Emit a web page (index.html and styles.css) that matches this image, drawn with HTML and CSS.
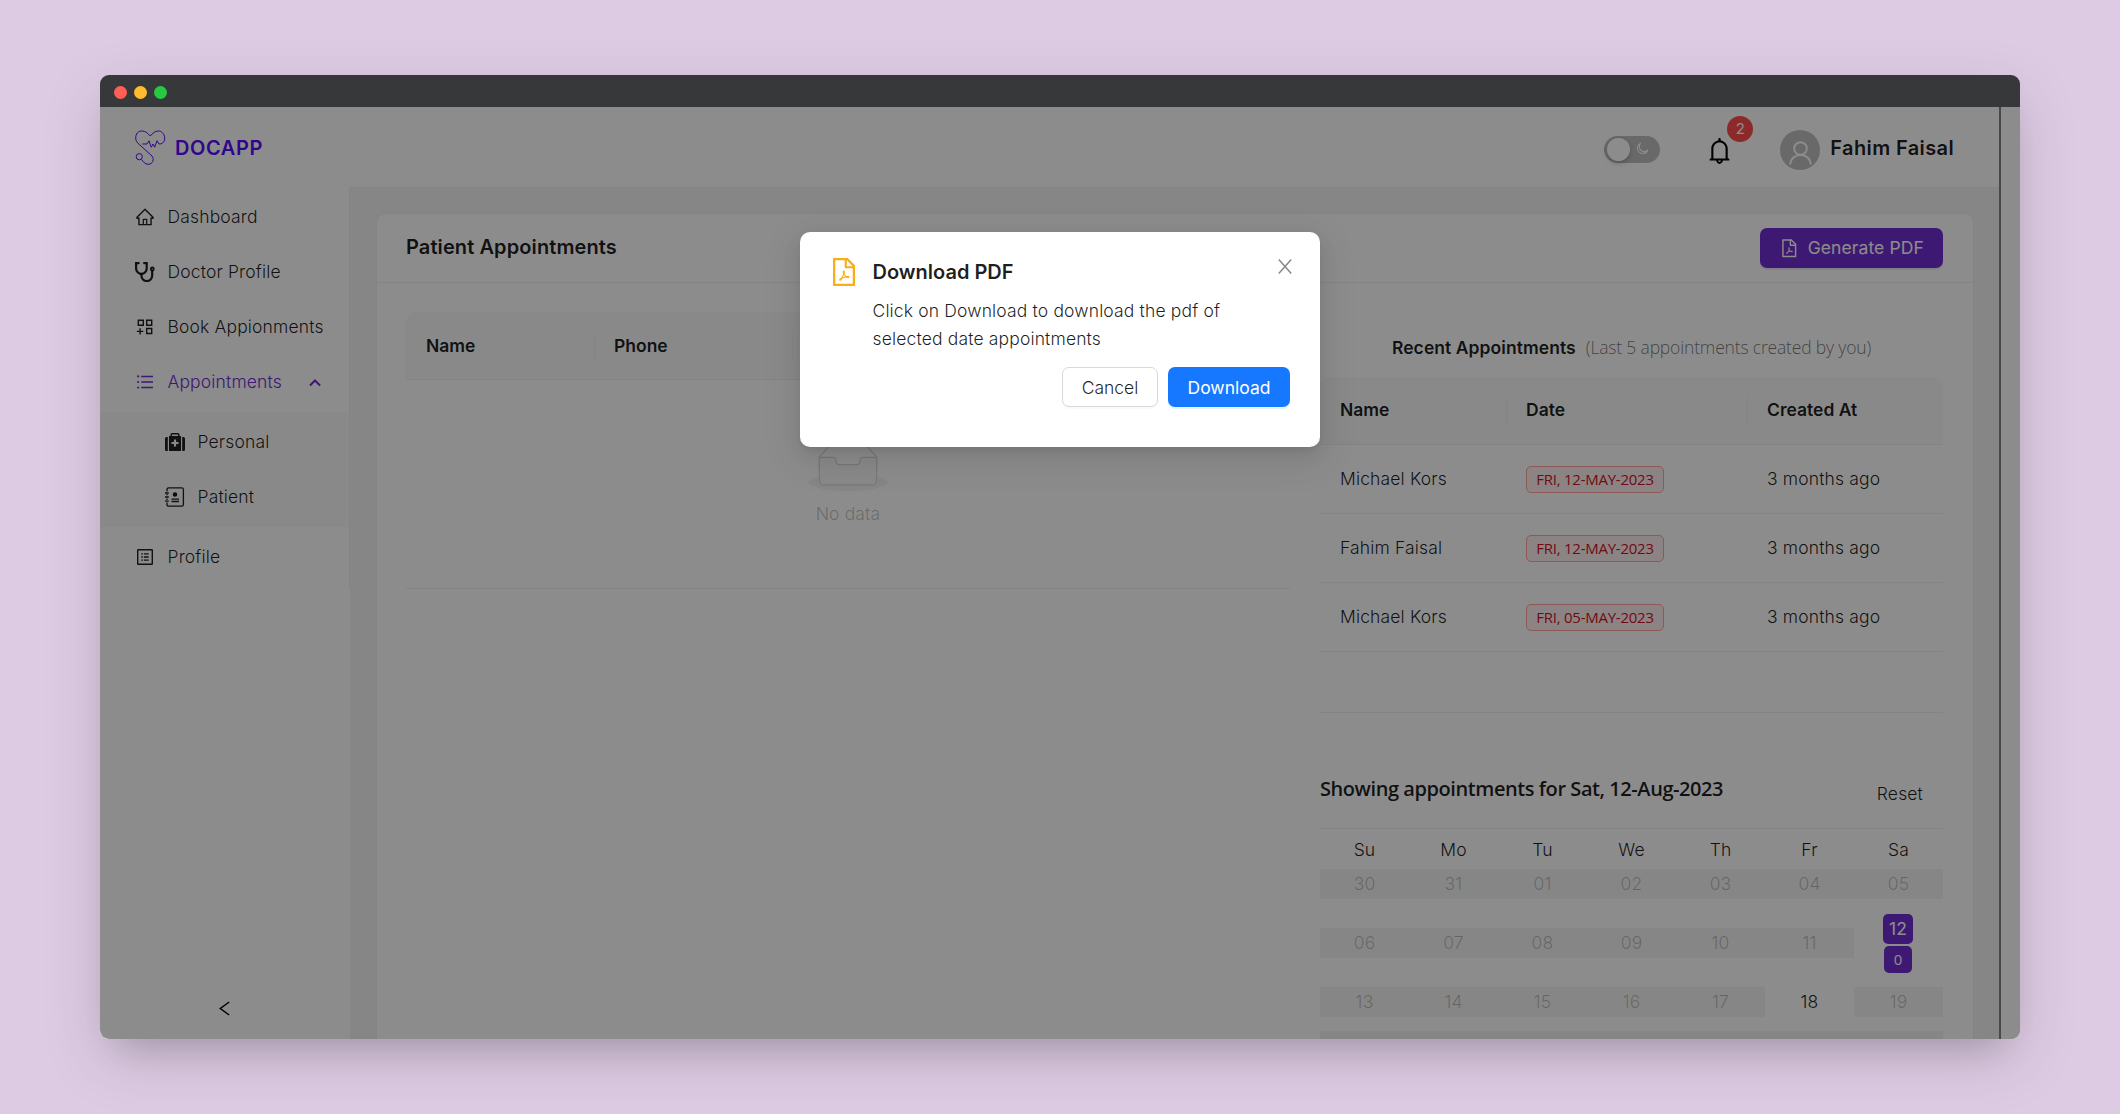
FILE: index.html
```html
<!DOCTYPE html>
<html lang="en">
<head>
<meta charset="utf-8">
<title>DocApp - Patient Appointments</title>
<link rel="stylesheet" href="styles.css">
</head>
<body>
<svg class="sprite" aria-hidden="true">
  <symbol id="file-pdf" viewBox="0 0 1024 1024"><path d="M531.3 574.4l.3-1.4c5.8-23.9 13.1-53.7 7.4-80.7-3.8-21.3-19.5-29.6-32.9-30.2-15.8-.7-29.9 8.3-33.4 21.4-6.6 24-.7 56.8 10.1 98.6-13.6 32.4-35.3 79.5-51.2 107.5-29.6 15.3-69.3 38.9-75.2 68.7-1.2 5.5.2 12.5 3.5 18.8 3.7 7 9.6 12.4 16.5 15 3 1.1 6.6 2 10.8 2 17.6 0 46.1-14.2 84.1-79.4 5.8-1.9 11.8-3.9 17.6-5.9 27.2-9.2 55.4-18.8 80.9-23.1 28.2 15.1 60.3 24.8 82.1 24.8 21.6 0 30.1-12.8 33.3-20.5 5.6-13.5 2.9-30.5-6.2-39.6-13.2-13-45.3-16.4-95.3-10.2-24.6-15-40.7-35.4-52.4-65.8zM421.6 726.3c-13.9 20.2-24.4 30.3-30.1 34.7 6.7-12.3 19.8-25.3 30.1-34.7zm87.6-235.5c5.2 8.9 4.5 35.8.5 49.4-4.9-19.9-5.6-48.1-2.7-51.4.8.1 1.5.7 2.2 2zm-1.6 120.5c10.7 18.5 24.2 34.4 39.1 46.2-21.6 4.9-41.3 13-58.9 20.2-4.2 1.7-8.3 3.4-12.3 5 13.3-24.1 24.4-51.4 32.1-71.4zm155.6 65.5c.1.2.2.5-.4.9h-.2l-.2.3c-.8.5-9 5.3-44.3-8.6 40.6-1.9 45 7.3 45.1 7.4zm191.4-388.2L639.4 73.4c-6-6-14.1-9.4-22.6-9.4H192c-17.7 0-32 14.3-32 32v832c0 17.7 14.3 32 32 32h640c17.7 0 32-14.3 32-32V311.3c0-8.5-3.4-16.7-9.4-22.7zM790.2 326H602V137.8L790.2 326zm1.8 562H232V136h302v216a42 42 0 0042 42h216v494z"/></symbol>
</svg>
<div class="window">
  <div class="titlebar"><i class="dot red"></i><i class="dot yellow"></i><i class="dot green"></i></div>
  <div class="viewport">
    <div class="app">
      <header class="header">
        <div class="brand">
          <svg width="31" height="35" viewBox="0 0 31 35" fill="none" stroke="currentColor" stroke-width="1" stroke-linejoin="round"><path d="M7.300 14H12l2-3.200 2.300 6.500L18 14l1.700 3.200L22 10.800l2 3.200h.5C28 14 30 11 29.700 8 29.300 3 26 1 23.700 1 20 1 18 3 15.300 6 12.500 3 10.500 1 6.700 1 3 1 .7 4 .7 8c0 2 .8 3.500 2 5L17 26c2.500 3 1 8.300-3.700 8.300-3.300 0-4.800-2.300-6.800-4.800"/><circle cx="4.300" cy="26.700" r="3.100"/></svg>
          <span>DOCAPP</span>
        </div>
        <div class="tools">
          <div class="switch"><i class="knob"></i><svg class="moon" width="13" height="13" viewBox="0 0 13 13" fill="none" stroke="#fff" stroke-width="1.100" stroke-linejoin="round"><path d="M4.600 1.200A5.400 5.400 0 1 0 11.900 8 4.700 4.700 0 0 1 4.600 1.200z"/></svg></div>
          <div class="bell">
            <svg width="31" height="30" viewBox="0 0 1024 1024"><path fill="#000" d="M816 768h-24V428c0-141.100-104.300-257.700-240-277.100V112c0-22.100-17.900-40-40-40s-40 17.900-40 40v38.900c-135.700 19.400-240 136-240 277.100v340h-24c-17.700 0-32 14.300-32 32v32c0 4.400 3.600 8 8 8h216c0 61.800 50.200 112 112 112s112-50.200 112-112h216c4.400 0 8-3.600 8-8v-32c0-17.700-14.300-32-32-32zM512 888c-26.500 0-48-21.500-48-48h96c0 26.500-21.500 48-48 48zM304 768V428c0-55.600 21.600-107.800 60.900-147.100S456.400 220 512 220c55.600 0 107.800 21.600 147.100 60.900S720 372.400 720 428v340H304z"/></svg>
            <span class="count">2</span>
          </div>
          <div class="avatar"><svg width="25" height="27" viewBox="0 0 25 27" fill="none" stroke="#fff" stroke-width="2"><circle cx="12.500" cy="9.500" r="6.300"/><path d="M2.200 25.500C2.600 19.600 6.900 15.900 12.500 15.900S22.400 19.600 22.800 25.500"/></svg></div>
          <span class="user">Fahim Faisal</span>
        </div>
      </header>
      <div class="body">
        <aside class="sider">
          <nav class="menu">
            <a class="item"><svg width="20" height="20" viewBox="0 0 1024 1024" fill="currentColor"><path d="M946.500 505L560.100 118.800l-25.900-25.900a31.500 31.500 0 00-44.400 0L77.500 505a63.900 63.900 0 00-18.800 46c.4 35.200 29.700 63.300 64.900 63.300h42.500V940h691.800V614.300h43.400c17.100 0 33.200-6.700 45.300-18.800a63.600 63.600 0 0018.700-45.300c0-17-6.700-33.100-18.800-45.200zM568 868H456V664h112v204zm217.900-325.700V868H632V640c0-22.100-17.900-40-40-40H432c-22.100 0-40 17.900-40 40v228H238.100V542.300h-96l370-369.700 23.100 23.100L882 542.300h-96.100z"/></svg><span>Dashboard</span></a>
            <a class="item"><svg width="20" height="20" viewBox="0 0 20 20" fill="none" stroke="currentColor" stroke-width="2.200" stroke-linecap="round"><path d="M3.700 1.100H1.100V6.500a5.300 5.300 0 0 0 10.600 0V1.100H9.100"/><path d="M6.400 12v1.600a5.300 5.300 0 0 0 10.800 0V9"/><circle cx="17.300" cy="7" r="1.500" stroke-width="1.800"/></svg><span>Doctor Profile</span></a>
            <a class="item"><svg width="20" height="20" viewBox="0 0 20 20" fill="none" stroke="currentColor" stroke-width="1.400"><path d="M3.300 3.300h5v5h-5zM11.700 3.300h5v5h-5zM11.700 11.500h5v5h-5zM5.100 11.200v6.400M1.900 14.400h6.400"/></svg><span>Book Appionments</span></a>
            <a class="item open"><svg width="20" height="20" viewBox="0 0 1024 1024" fill="currentColor"><path d="M320 192h600v72H320zM320 476h600v72H320zM320 760h600v72H320z"/><circle cx="160" cy="228" r="56"/><circle cx="160" cy="512" r="56"/><circle cx="160" cy="796" r="56"/></svg><span>Appointments</span><svg class="caret" width="12" height="9" viewBox="0 0 12 9" fill="none" stroke="currentColor" stroke-width="2"><path d="M1 7.500l5-5 5 5"/></svg></a>
            <div class="submenu">
              <a class="item"><svg width="20" height="18" viewBox="0 0 20 18" fill="currentColor"><path fill-rule="evenodd" d="M5.500 3V1.600Q5.500 0 7 0h6q1.500 0 1.500 1.600V3H16v15H4V3zM7 3h6V1.500H7zM8.900 6.500v2.400H6.500v2.200h2.400v2.400h2.200v-2.400h2.400V8.900h-2.400V6.500z"/><path d="M2.800 4v14H1.500Q0 18 0 16.500v-11Q0 4 1.500 4zM17.200 4v14h1.300q1.500 0 1.500-1.500v-11Q20 4 18.500 4z"/></svg><span>Personal</span></a>
              <a class="item"><svg width="20" height="20" viewBox="0 0 20 20" fill="none" stroke="currentColor" stroke-width="1.300"><path d="M2 4.500V2.500Q2 .8 3.700.8h13Q18.400.8 18.400 2.500v15q0 1.700-1.700 1.700h-13Q2 19.200 2 17.500v-2M2 7v1.300M2 11.500V13M0 6h3.800M0 10h3.800M0 14.200h3.800"/><circle cx="10" cy="7.500" r="1.600" fill="currentColor"/><path d="M6.500 12.200h7.500M6.500 14.500h7.500"/></svg><span>Patient</span></a>
            </div>
            <a class="item"><svg width="20" height="20" viewBox="0 0 20 20" fill="none" stroke="currentColor" stroke-width="1.400"><rect x="2.700" y="2.700" width="14.600" height="14.600" rx=".5"/><path d="M6.300 6.900h1.600M8.900 6.900h4.800M6.300 10h1.600M8.900 10h4.800M6.300 13.100h1.600M8.900 13.100h4.800"/></svg><span>Profile</span></a>
          </nav>
          <div class="collapse"><svg width="11" height="15" viewBox="0 0 11 15" fill="none" stroke="currentColor" stroke-width="1.500"><path d="M10.200 1L1.300 7.500l8.900 6.500"/></svg></div>
        </aside>
        <main class="main">
          <section class="card">
            <div class="card-head"><h1>Patient Appointments</h1><button class="btn purple"><svg width="20.500" height="20.500" fill="currentColor"><use href="#file-pdf"/></svg><span>Generate PDF</span></button></div>
            <div class="card-body">
              <div class="left">
                <div class="thead"><div class="th c1">Name</div><div class="th c2">Phone</div><div class="th"></div></div>
                <div class="empty">
                  <svg width="80" height="51" viewBox="0 0 64 41"><g transform="translate(0 1)" fill="none" fill-rule="evenodd"><ellipse fill="#f5f5f5" cx="32" cy="33" rx="32" ry="7"/><g stroke="#d9d9d9"><path d="M55 12.760L44.854 1.258C44.367.474 43.656 0 42.907 0H21.093c-.749 0-1.460.474-1.947 1.257L9 12.761V22h46v-9.240z"/><path fill="#fafafa" d="M41.613 15.931c0-1.605.994-2.930 2.227-2.931H55v18.137C55 33.260 53.680 35 52.050 35h-40.100C10.320 35 9 33.259 9 31.137V13h11.160c1.233 0 2.227 1.323 2.227 2.928v.022c0 1.605 1.005 2.901 2.237 2.901h14.752c1.232 0 2.237-1.308 2.237-2.913v-.007z"/></g></g></svg>
                  <p>No data</p>
                </div>
              </div>
              <div class="right">
                <div class="recent-title"><b>Recent Appointments</b><span>(Last 5 appointments created by you)</span></div>
                <div class="thead"><div class="th r1">Name</div><div class="th r2">Date</div><div class="th">Created At</div></div>
                <div class="row"><div class="r1">Michael Kors</div><div class="r2"><span class="tag">FRI, 12-MAY-2023</span></div><div>3 months ago</div></div>
                <div class="row"><div class="r1">Fahim Faisal</div><div class="r2"><span class="tag">FRI, 12-MAY-2023</span></div><div>3 months ago</div></div>
                <div class="row"><div class="r1">Michael Kors</div><div class="r2"><span class="tag">FRI, 05-MAY-2023</span></div><div>3 months ago</div></div>
                <div class="table-end"></div>
                <div class="cal-head"><h2>Showing appointments for Sat, 12-Aug-2023</h2><span class="reset">Reset</span></div>
                <div class="week names"><span>Su</span><span>Mo</span><span>Tu</span><span>We</span><span>Th</span><span>Fr</span><span>Sa</span></div>
                <div class="week"><span class="off">30</span><span class="off">31</span><span class="off">01</span><span class="off">02</span><span class="off">03</span><span class="off">04</span><span class="off">05</span></div>
                <div class="week"><span class="off">06</span><span class="off">07</span><span class="off">08</span><span class="off">09</span><span class="off">10</span><span class="off">11</span><div class="selected"><b>12</b><i>0</i></div></div>
                <div class="week"><span class="off">13</span><span class="off">14</span><span class="off">15</span><span class="off">16</span><span class="off">17</span><span>18</span><span class="off">19</span></div>
                <div class="week last"><span class="off"></span><span class="off"></span><span class="off"></span><span class="off"></span><span class="off"></span><span class="off"></span><span class="off"></span></div>
              </div>
            </div>
          </section>
        </main>
      </div>
    </div>
    <div class="scrollbar"></div>
    <div class="mask">
      <div class="modal" role="dialog">
        <svg class="warn" width="32" height="32" fill="#faad14"><use href="#file-pdf"/></svg>
        <div class="modal-text">
          <h3>Download PDF</h3>
          <p>Click on Download to download the pdf of<br>selected date appointments</p>
          <div class="actions"><button class="btn plain">Cancel</button><button class="btn blue">Download</button></div>
        </div>
        <svg class="close" width="14" height="15" viewBox="0 0 14 15" fill="none" stroke="#888" stroke-width="1.500"><path d="M.8.500l12.400 14M13.200.500L.8 14.500"/></svg>
      </div>
    </div>
  </div>
</div>
</body>
</html>
```
FILE: styles.css
```css
* { box-sizing: border-box; }
body {
  margin: 0;
  height: 1114px;
  padding: 75px 100px;
  overflow: hidden;
  background: #ddcbe3;
  font: 300 17.5px/27.5px Inter, sans-serif;
  letter-spacing: .15px;
  color: rgba(0, 0, 0, .88);
}
h1, h2, h3, p { margin: 0; }
svg { display: block; flex: none; }
.sprite { display: none; }

.window {
  height: 964px;
  border-radius: 9px;
  box-shadow: 0 20px 60px rgba(0, 0, 0, .15), 0 22px 36px -22px rgba(0, 0, 0, .2);
}
.titlebar {
  height: 32px;
  padding: 2px 13.5px 0;
  display: flex;
  align-items: center;
  gap: 7px;
  background: #37383a;
  border-radius: 9px 9px 0 0;
}
.dot { width: 13px; height: 13px; border-radius: 50%; }
.red { background: #ff5f57; }
.yellow { background: #febc2e; }
.green { background: #28c840; }

.viewport {
  position: relative;
  height: 932px;
  display: flex;
  overflow: hidden;
  background: #fff;
  border-radius: 0 0 9px 9px;
}
.app { width: 1899px; }
.scrollbar {
  position: relative;
  z-index: 2;
  width: 21px;
  border-left: 2px solid #48494a;
  background: #8c8c8c;
}

/* Top bar */
.header {
  height: 80px;
  padding: 0 45px 0 35px;
  display: flex;
  align-items: center;
  justify-content: space-between;
}
.brand {
  display: flex;
  align-items: center;
  gap: 9px;
  color: #5a0aff;
  font-size: 20px;
  font-weight: 600;
}
.brand span { padding-top: 3px; letter-spacing: .6px; }
.tools { display: flex; align-items: center; padding-top: 5px; }
.switch {
  display: flex;
  align-items: center;
  width: 56px;
  height: 27px;
  padding: 0 3px;
  border-radius: 14px;
  background: rgba(0, 0, 0, .25);
}
.knob { width: 23px; height: 23px; border-radius: 50%; background: #fff; box-shadow: 0 2px 5px rgba(0, 35, 11, .25); }
.moon { margin: -3px 0 0 6px; }
.bell { position: relative; margin: 3px 45px 0 44px; }
.count {
  position: absolute;
  left: 23px;
  top: -20px;
  width: 26px;
  height: 26px;
  border-radius: 50%;
  background: #ff4d4f;
  color: #fff;
  font-size: 15px;
  font-weight: 400;
  line-height: 26px;
  letter-spacing: 0;
  text-align: center;
}
.avatar {
  width: 40px;
  height: 40px;
  padding: 9px 0 0 7.5px;
  border-radius: 50%;
  background: rgba(0, 0, 0, .25);
}
.user { margin: -1px 0 0 10px; font-size: 20px; font-weight: 600; letter-spacing: .37px; }

/* Side menu */
.body { display: flex; height: 852px; background: #f5f5f5; }
.sider { display: flex; flex-direction: column; justify-content: space-between; width: 250px; background: #fff; }
.menu { border-right: 1px solid #f0f0f0; padding: 5px 0; display: flex; flex-direction: column; gap: 5px; }
.item { display: flex; align-items: center; height: 50px; padding-left: 35px; gap: 12.5px; }
.open { color: #722ed1; }
.caret { margin: 1px 0 0 15px; }
.submenu { background: #fafafa; padding: 5px 0; display: flex; flex-direction: column; gap: 5px; }
.submenu .item { padding-left: 65px; }
.collapse { padding: 0 0 23px 119px; height: 38px; color: #000; }

/* Content card */
.main { flex: 1; padding: 26px 25px 0 26px; }
.card { height: 900px; background: #fff; border: 1px solid #f0f0f0; border-radius: 10px; }
.card-head {
  height: 69px;
  padding: 0 30px 0 29px;
  display: flex;
  align-items: center;
  justify-content: space-between;
  border-bottom: 1px solid #f0f0f0;
}
h1 { font-size: 20px; font-weight: 600; letter-spacing: .1px; }
.btn {
  display: flex;
  align-items: center;
  justify-content: center;
  height: 40px;
  border: 0;
  border-radius: 7px;
  font: inherit;
  letter-spacing: inherit;
  color: #fff;
}
.purple { width: 183px; gap: 8px; background: #722ed1; font-weight: 400; letter-spacing: .1px; box-shadow: 0 2px 0 rgba(114, 46, 209, .1); }
.card-body { padding: 29px; display: flex; gap: 30px; }
.left { width: 884px; }
.right { width: 623px; }
.thead {
  display: flex;
  align-items: center;
  height: 68px;
  background: #fafafa;
  border-bottom: 1px solid #f0f0f0;
  border-radius: 10px 10px 0 0;
  font-weight: 600;
  letter-spacing: 0;
}
.th { padding-left: 20px; height: 28px; line-height: 26px; }
.th + .th { border-left: 1px solid #f0f0f0; padding-left: 19px; }
.left .th { line-height: 28px; }
.c1 { width: 188px; }
.c2 { width: 198px; }
.empty {
  display: flex;
  flex-direction: column;
  align-items: center;
  height: 209px;
  padding-top: 60px;
  gap: 9px;
  border-bottom: 1px solid #f0f0f0;
  color: rgba(0, 0, 0, .25);
}
.recent-title { display: flex; justify-content: center; gap: 10px; padding: 22px 0 15px; height: 65px; }
.recent-title b { font-weight: 600; letter-spacing: .07px; }
.recent-title span { font-family: "Open Sans", sans-serif; letter-spacing: -.17px; color: rgba(0, 0, 0, .55); }
.r1 { width: 186px; }
.r2 { width: 241px; }
.row { display: flex; align-items: center; height: 69px; border-bottom: 1px solid #f0f0f0; }
.row div { padding-left: 20px; }
.tag {
  display: block;
  width: 138px;
  height: 27px;
  border: 1px solid #ffa39e;
  border-radius: 5px;
  background: #fff1f0;
  color: #cf1322;
  font: 400 15px/25px "Open Sans", sans-serif;
  letter-spacing: -.25px;
  text-align: center;
  white-space: nowrap;
}
.table-end { height: 61px; border-bottom: 1px solid #f0f0f0; }
.cal-head { display: flex; justify-content: space-between; height: 116px; padding: 62px 20px 0 0; border-bottom: 1px solid #f0f0f0; }
h2 { font: 600 20px/28px "Open Sans", sans-serif; letter-spacing: -.43px; }
.reset { padding-top: 5px; }
.week { display: grid; grid-template-columns: repeat(7, 1fr); align-items: center; height: 59px; line-height: 30px; text-align: center; }
.names { height: 27px; margin-top: 6px; }
.names + .week { height: 51px; padding-bottom: 8px; }
.last { height: 30px; }
.off { height: 30px; background: #f5f5f5; color: rgba(0, 0, 0, .25); }
.selected { display: flex; flex-direction: column; align-items: center; gap: 2px; padding: 1px 1px 0 0; color: #fff; }
.selected b { width: 30px; height: 30px; border-radius: 5px; background: #722ed1; font-weight: 400; }
.selected i { width: 28px; height: 27px; border-radius: 5px; background: #722ed1; font: 400 15px/27px "Open Sans", sans-serif; }

/* Confirm dialog */
.mask { position: absolute; inset: 0; background: rgba(0, 0, 0, .45); display: flex; justify-content: center; align-items: flex-start; padding-top: 125px; }
.modal {
  position: relative;
  display: flex;
  width: 520px;
  height: 215px;
  padding: 25px 30px;
  border-radius: 10px;
  background: #fff;
  box-shadow: 0 7.5px 20px rgba(0, 0, 0, .08), 0 4px 8px -5px rgba(0, 0, 0, .12), 0 11px 35px 10px rgba(0, 0, 0, .05);
}
.warn { margin: -1px 12.5px 0 -2px; }
.modal-text { flex: 1; }
h3 { font-size: 20px; font-weight: 600; line-height: 30px; letter-spacing: 0; }
.modal p { padding-top: 10px; line-height: 28px; }
.actions { display: flex; justify-content: flex-end; gap: 10px; padding-top: 14px; }
.actions .btn { padding-top: 2px; letter-spacing: 0; }
.plain { width: 96px; border: 1px solid #d9d9d9; background: #fff; color: rgba(0, 0, 0, .88); box-shadow: 0 2px 0 rgba(0, 0, 0, .02); }
.blue { width: 122px; background: #1677ff; font-weight: 400; box-shadow: 0 2px 0 rgba(5, 145, 255, .1); }
.close { position: absolute; right: 28px; top: 27px; }
```
